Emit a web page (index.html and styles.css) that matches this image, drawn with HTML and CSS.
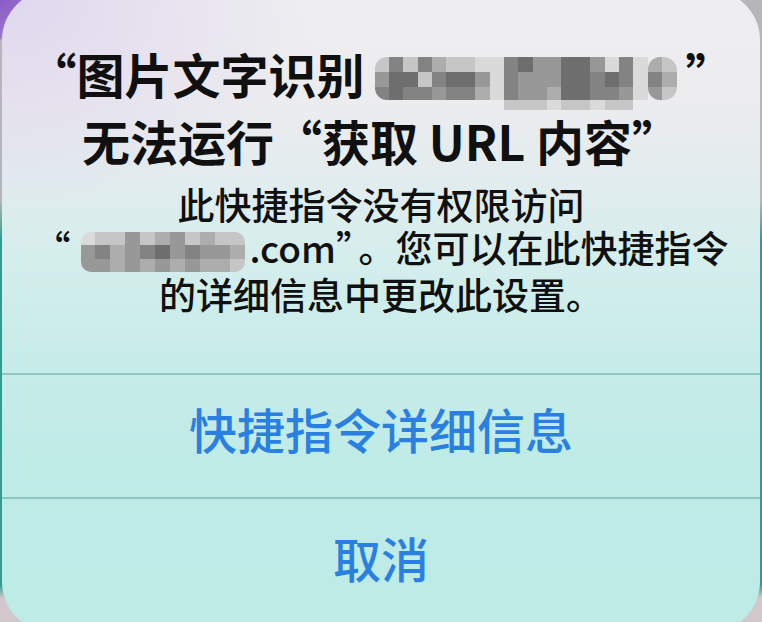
FILE: index.html
```html
<!DOCTYPE html>
<html lang="zh-CN">
<head>
<meta charset="utf-8">
<title>Alert</title>
<link rel="stylesheet" href="styles.css">
</head>
<body>
<div class="alert">
  <div class="content">
    <div class="title">
      <div class="line">“图片文字识别<span class="mosaic mosaic-title">
        <i class="s6 tl"></i><i class="s3"></i><i class="s6"></i><i class="s3"></i><i class="s5"></i><i class="s6"></i><i class="s6"></i><i class="s7"></i><i class="s7"></i><i class="s3"></i><i class="s2"></i><i class="s4"></i><i class="s4"></i><i class="s2"></i><i class="s2"></i><i class="s4"></i><i class="s7"></i><i class="s3"></i><i class="s7"></i><i class="s5 tl"></i><i class="s6 tr"></i>
        <i class="s4"></i><i class="s2"></i><i class="s2"></i><i class="s6"></i><i class="s3"></i><i class="s2"></i><i class="s2"></i><i class="s4"></i><i class="s7"></i><i class="s3"></i><i class="s4"></i><i class="s4"></i><i class="s4"></i><i class="s2"></i><i class="s2"></i><i class="s3"></i><i class="s2"></i><i class="s3"></i><i class="s7"></i><i class="s3"></i><i class="s5"></i>
        <i class="s3 bl"></i><i class="s2"></i><i class="s3"></i><i class="s3"></i><i class="s4"></i><i class="s3"></i><i class="s3"></i><i class="s5"></i><i class="s7"></i><i class="s3"></i><i class="s4"></i><i class="s4"></i><i class="s5"></i><i class="s2"></i><i class="s2"></i><i class="s3"></i><i class="s3"></i><i class="s4"></i><i class="s7"></i><i class="s4 bl"></i><i class="s6 br"></i>
        <i class="s0"></i><i class="s0"></i><i class="s0"></i><i class="s0"></i><i class="s0"></i><i class="s0"></i><i class="s0"></i><i class="s0"></i><i class="s0"></i><i class="s6"></i><i class="s6"></i><i class="s6"></i><i class="s7"></i><i class="s6"></i><i class="s6"></i><i class="s7"></i><i class="s6"></i><i class="s6"></i><i class="s0"></i><i class="s0"></i><i class="s0"></i>
      </span>”</div>
      <div class="line">无法运行“获取 URL 内容”</div>
    </div>
    <div class="message">
      <div class="line">此快捷指令没有权限访问</div>
      <div class="line">“<span class="mosaic mosaic-body">
        <i class="s7"></i><i class="s6"></i><i class="s6"></i><i class="s4"></i><i class="s6"></i><i class="s5"></i><i class="s4"></i><i class="s6"></i><i class="s5"></i><i class="s6"></i><i class="s6"></i>
        <i class="s4"></i><i class="s3"></i><i class="s5"></i><i class="s4"></i><i class="s3"></i><i class="s2"></i><i class="s4"></i><i class="s3"></i><i class="s4"></i><i class="s4"></i><i class="s5"></i>
        <i class="s4"></i><i class="s4"></i><i class="s5"></i><i class="s4"></i><i class="s5"></i><i class="s4"></i><i class="s5"></i><i class="s4"></i><i class="s5"></i><i class="s5"></i><i class="s6"></i>
      </span>.com”<span class="stop">。</span>您可以在此快捷指令</div>
      <div class="line">的详细信息中更改此设置。</div>
    </div>
  </div>
  <div class="action">快捷指令详细信息</div>
  <div class="action action-last">取消</div>
</div>
</body>
</html>
```

FILE: styles.css
```css
html, body {
  margin: 0;
  padding: 0;
}

body {
  width: 762px;
  height: 622px;
  overflow: hidden;
  font-family: "Noto Sans CJK SC", "Noto Sans", sans-serif;
  background:
    radial-gradient(circle at 0 0, #8a5cc6 0, #9b74d0 38px, transparent 40px),
    linear-gradient(to bottom, #b6b5ba 0, #b6b5ba 200px, #2f9d8f 240px, #2f9d8f 585px, #d2c8cc 598px);
}

.alert {
  box-sizing: border-box;
  margin: -10px 2px 0;
  height: 642px;
  border-radius: 50px;
  overflow: hidden;
  display: flex;
  flex-direction: column;
  background:
    radial-gradient(ellipse 320px 220px at 0 0, rgba(205, 185, 235, 0.45), rgba(205, 185, 235, 0) 100%),
    linear-gradient(to bottom, #efeff1 0, #ececef 110px, #e2ecee 190px, #d4eeec 270px, #c8ece9 360px, #bfebe7 470px, #bdebe6 100%);
}

.content {
  padding: 50px 0 57px;
  text-align: center;
  white-space: nowrap;
  color: #101010;
}

.title {
  font-size: 48px;
  font-weight: 700;
  line-height: 66px;
}

.message {
  margin-top: 10px;
  font-size: 37px;
  font-weight: 500;
  line-height: 43px;
}

.stop {
  margin-left: 4px;
}

.mosaic {
  display: inline-grid;
  vertical-align: middle;
}

.mosaic i {
  display: block;
}

.mosaic-title {
  width: 302px;
  grid-template-columns: repeat(21, 1fr);
  grid-template-rows: 15px 15px 13px 10px;
  margin: 0 9px 0 10px;
  position: relative;
  top: 3px;
}

.mosaic-body {
  width: 164px;
  grid-template-columns: repeat(11, 1fr);
  grid-template-rows: 13px 14px 13px;
  border-radius: 10px;
  overflow: hidden;
  margin: 0 5px 0 10px;
  position: relative;
  top: -1px;
}

.s0 { background: transparent; }
.s2 { background: #6e6e6e; }
.s3 { background: #838383; }
.s4 { background: #989898; }
.s5 { background: #adadad; }
.s6 { background: #c6c6c6; }
.s7 { background: #dadada; }

.tl { border-top-left-radius: 12px; }
.tr { border-top-right-radius: 14px; }
.bl { border-bottom-left-radius: 12px; }
.br { border-bottom-right-radius: 14px; }

.action {
  box-sizing: border-box;
  border-top: 2px solid #8fc6c2;
  height: 129px;
  padding-bottom: 16px;
  display: flex;
  align-items: center;
  justify-content: center;
  font-size: 48px;
  font-weight: 500;
  color: #2a7fe3;
}

.action-last {
  height: 140px;
  padding-bottom: 18px;
}
```
